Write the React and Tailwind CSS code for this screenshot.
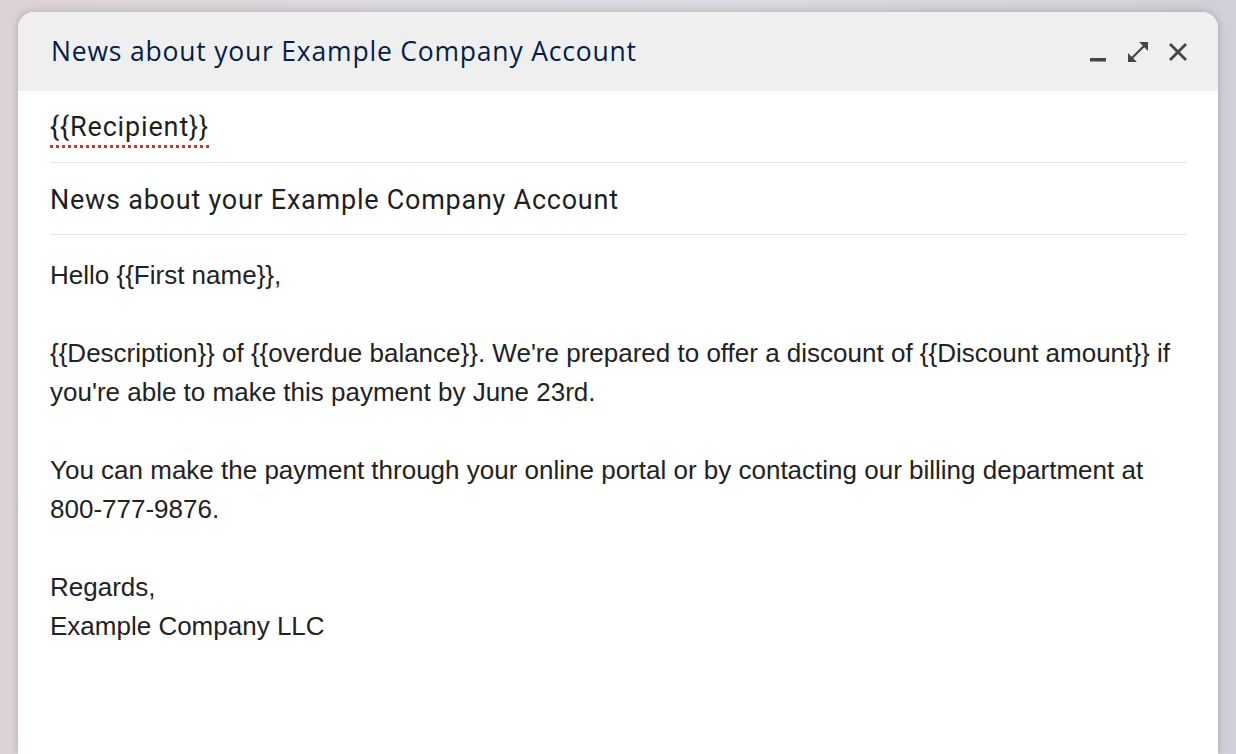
import React from 'react';

const MinimizeIcon = () => (
  <svg width="20" height="20" viewBox="0 0 20 20" fill="#444746">
    <rect x="2" y="16" width="16" height="3.5" />
  </svg>
);

const ExpandIcon = () => (
  <svg width="20" height="20" viewBox="3 3 18 18" fill="#444746">
    <path d="M21 11V3h-8l3.29 3.29-10 10L3 13v8h8l-3.29-3.29 10-10z" />
  </svg>
);

const CloseIcon = () => (
  <svg width="20" height="20" viewBox="0 0 20 20" stroke="#444746" strokeWidth="2.8">
    <line x1="2" y1="2" x2="18" y2="18" />
    <line x1="18" y1="2" x2="2" y2="18" />
  </svg>
);

const ComposeWindow = () => {
  const subject = 'News about your Example Company Account';

  return (
    <div className="h-full bg-white rounded-t-2xl overflow-hidden shadow-[0_0_8px_rgba(0,0,0,0.22)]">
      {/* Title bar */}
      <div className="h-[79px] bg-[#efefef] flex items-center justify-between pl-[33px] pr-[30px]">
        <h1 className="text-[26.5px] text-[#041e49] font-['Open_Sans',sans-serif] font-medium tracking-[0.8px]">
          {subject}
        </h1>
        <div className="flex items-center gap-5">
          <MinimizeIcon />
          <ExpandIcon />
          <CloseIcon />
        </div>
      </div>

      <div className="px-[32px]">
        {/* Recipients */}
        <div className="h-[72px] pt-[2px] flex items-center border-b border-[#e3e5e8] font-['Roboto',sans-serif] text-[27px] tracking-[0.85px] text-[#1f1f1f]">
          <span className="underline decoration-dotted decoration-[#d93025] decoration-[3px] underline-offset-[9px]">
            {'{{Recipient}}'}
          </span>
        </div>

        {/* Subject */}
        <div className="h-[72px] pt-[3px] flex items-center border-b border-[#e3e5e8] font-['Roboto',sans-serif] text-[27px] tracking-[0.75px] text-[#1f1f1f]">
          {subject}
        </div>

        {/* Body */}
        <div className="pt-[21px] font-['Liberation_Sans',Arial,sans-serif] text-[26px] leading-[39px] text-[#222222]">
          <p>{'Hello {{First name}},'}</p>
          <br />
          <p>
            {"{{Description}} of {{overdue balance}}. We're prepared to offer a discount of {{Discount amount}} if you're able to make this payment by June 23rd."}
          </p>
          <br />
          <p>
            You can make the payment through your online portal or by contacting our billing department at 800-777-9876.
          </p>
          <br />
          <p>Regards,</p>
          <p>Example Company LLC</p>
        </div>
      </div>
    </div>
  );
};

export default function App() {
  return (
    <div className="h-[754px] w-full overflow-hidden pt-3 px-[18px] bg-[linear-gradient(90deg,#ddd3d7_0%,#dcd8de_30%,#d9d9e2_60%,#cfd0d8_100%)]">
      <ComposeWindow />
    </div>
  );
}
